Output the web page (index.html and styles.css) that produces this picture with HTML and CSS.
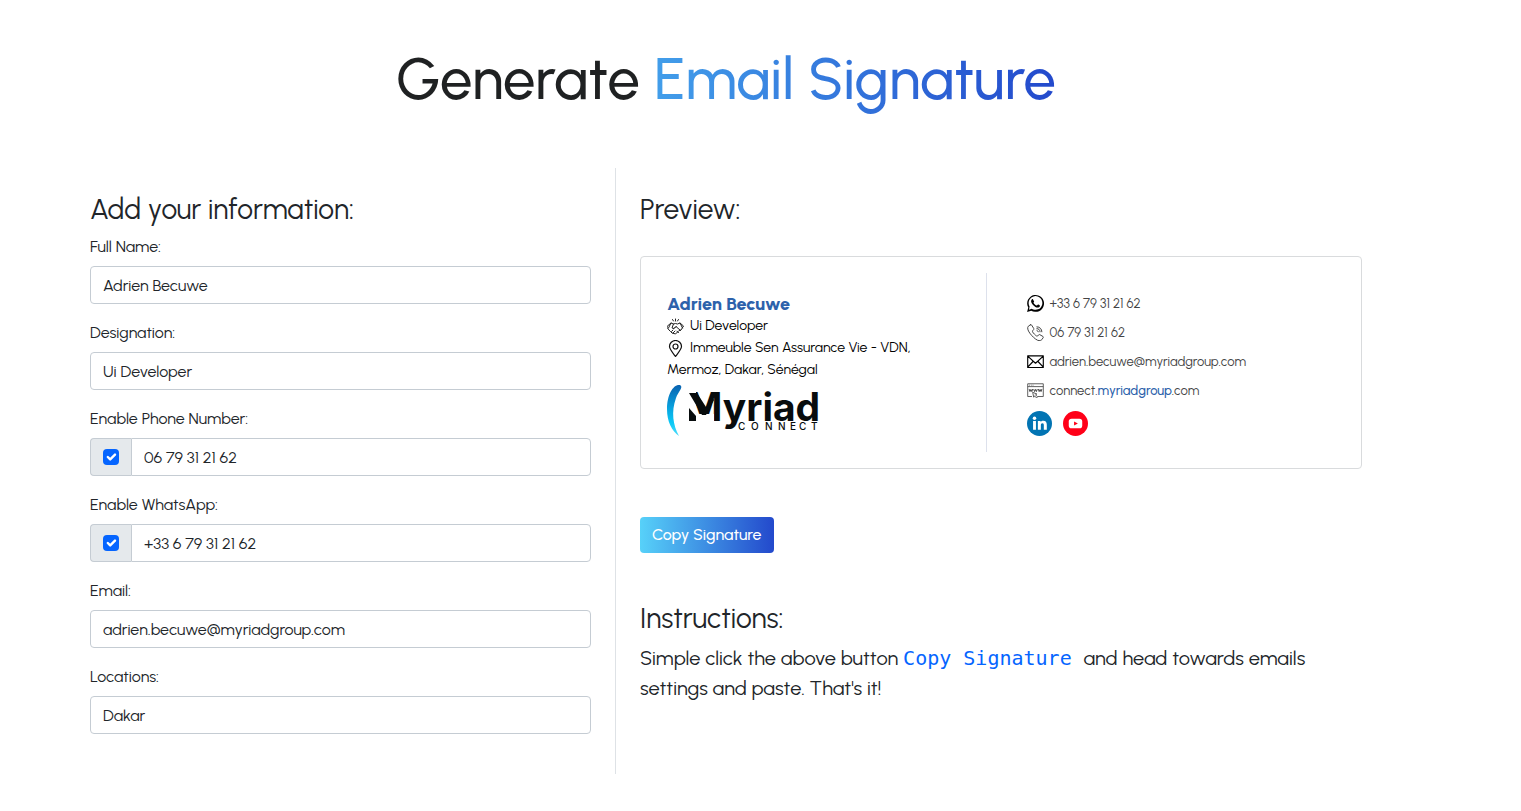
FILE: index.html
```html
<!DOCTYPE html>
<html lang="en">
<head>
<meta charset="utf-8">
<meta name="viewport" content="width=device-width, initial-scale=1">
<title>Generate Email Signature</title>
<link rel="stylesheet" href="styles.css">
</head>
<body>
<main class="page">
  <h1 class="title">Generate <span class="title-accent">Email Signature</span></h1>
  <div class="columns">
    <form class="form">
      <h2 class="heading">Add your information:</h2>
      <div class="field">
        <label for="name">Full Name:</label>
        <input class="control" id="name" type="text" value="Adrien Becuwe">
      </div>
      <div class="field">
        <label for="role">Designation:</label>
        <input class="control" id="role" type="text" value="Ui Developer">
      </div>
      <div class="field">
        <label for="phone">Enable Phone Number:</label>
        <div class="group">
          <span class="addon"><input class="check" type="checkbox" aria-label="Enable phone number" checked></span>
          <input class="control" id="phone" type="text" value="06 79 31 21 62">
        </div>
      </div>
      <div class="field">
        <label for="whatsapp">Enable WhatsApp:</label>
        <div class="group">
          <span class="addon"><input class="check" type="checkbox" aria-label="Enable WhatsApp" checked></span>
          <input class="control" id="whatsapp" type="text" value="+33 6 79 31 21 62">
        </div>
      </div>
      <div class="field">
        <label for="email">Email:</label>
        <input class="control" id="email" type="text" value="adrien.becuwe@myriadgroup.com">
      </div>
      <div class="field">
        <label for="location">Locations:</label>
        <input class="control" id="location" type="text" value="Dakar">
      </div>
    </form>
    <section class="output">
      <h2 class="heading">Preview:</h2>
      <div class="card">
        <div class="identity">
          <div class="person">Adrien Becuwe</div>
          <div class="line">
            <svg class="inline-icon" viewBox="0 0 34 34" fill="none" stroke="#222" stroke-width="2" stroke-linejoin="round" stroke-linecap="round"><path d="M1 16 8 10l5 2 4-1 4 1 5-2 7 6-5 8-4 1-7 7-3-1-4-1-3-3-3-3-3-4zM8 10l-5 10M26 10l5 10M13 12l-3 8 4 1 4-4 9 8M18 17l-4 4M12 24l-3 3M16 26l-4 4M20 27l3 2M17 2v4M11 3l2 3M23 3l-2 3"/></svg>Ui Developer
          </div>
          <div class="line">
            <svg class="inline-icon" viewBox="0 0 34 34" fill="none" stroke="#111" stroke-width="2.4"><path d="M17 33C11 25 5 18 5 13a12 12 0 0 1 24 0c0 5-6 12-12 20z"/><circle cx="17" cy="13" r="5"/></svg>Immeuble Sen Assurance Vie - VDN, Mermoz, Dakar, Sénégal
          </div>
          <svg class="logo" viewBox="0 0 156 52" role="img" aria-label="Myriad Connect">
            <defs><linearGradient id="swoosh" x1="0" y1="0" x2="0" y2="1"><stop offset="0" stop-color="#0a62b0"/><stop offset=".45" stop-color="#08a3df"/><stop offset=".75" stop-color="#0cc9f6"/><stop offset="1" stop-color="#52dcfa"/></linearGradient></defs>
            <path fill="url(#swoosh)" d="M13 0C6-1 0 10 0 24c0 13 5 22 12 27C6 40 4 27 9 13c2-6 8-11 4-13z"/>
            <text class="logo-name" x="19" y="36">Myriad</text>
            <path fill="#fff" d="M19 7h10v22h18v8H19z"/>
            <path fill="#080c0d" d="M22 8h8l9 14 6-10 2 3-8 15h-4zM22 23l7 8v5h-7z"/>
            <text class="logo-sub" x="71" y="45">C</text><text class="logo-sub" x="84" y="45">O</text><text class="logo-sub" x="98" y="45">N</text><text class="logo-sub" x="111" y="45">N</text><text class="logo-sub" x="123" y="45">E</text><text class="logo-sub" x="132" y="45">C</text><text class="logo-sub" x="144" y="45">T</text>
          </svg>
        </div>
        <div class="contacts">
          <div class="contact">
            <svg class="icon" viewBox="0 0 24 24"><path fill="#000" d="M.1 24l1.7-6.2A11.9 11.9 0 1 1 6 22.1zM6.600 19.300a9.700 9.700 0 1 0-3-3.200L2.900 20.900z" fill-rule="evenodd"/><path fill="#000" d="M8.500 6.300c-.4-.8-1-.6-1.500-.2-2.500 2.500-.8 5.500 1.500 8 3 3.200 6.300 4.700 8.800 3 .9-.7 1.100-1.900.9-2.300-.3-.4-2.200-1.300-2.700-1.300-.5 0-1 1.500-1.600 1.400-2-.7-3.700-2.200-4.700-4.100-.2-.5.900-1.200.9-1.800z"/></svg>
            <span>+33 6 79 31 21 62</span>
          </div>
          <div class="contact">
            <svg class="icon" viewBox="0 0 24 24" fill="none" stroke="#444" stroke-width="1.400" stroke-linejoin="round" stroke-linecap="round"><path d="M5 1 2 3C0 5 1 9 4 13s7 8 11 10c3 1 5 0 6-1l2-3c.4-.6 0-1-.5-1.400L18 15c-.7-.4-1.300-.2-1.700.4l-1.300 1.500c-1 .7-2 0-4.500-2.500S7.300 10.500 8 9.500L9.300 8c.5-.5.600-1 .2-1.700L6.500 1.500C6 .8 5.600.6 5 1zM14 9a3 3 0 0 1 2 2M14 6.500c2.500 0 4.500 2 4.500 4.500M14 4c4 0 7 3 7 7"/></svg>
            <span>06 79 31 21 62</span>
          </div>
          <div class="contact">
            <svg class="icon" viewBox="0 0 24 24" fill="none" stroke="#000" stroke-width="1.600" stroke-linejoin="round"><path d="M1 4h22v16.500H1zM1 4.500l11 10L23 4.500M1 20 8.500 12M23 20 15.500 12"/></svg>
            <span>adrien.becuwe@myriadgroup.com</span>
          </div>
          <div class="contact">
            <svg class="icon" viewBox="0 0 24 24" fill="none" stroke="#444" stroke-width="1.200" stroke-linejoin="round"><path d="M7 20.500H1V2.500h22v18h-8M1 6.500h22M3 4.500h1M5.500 4.500h1M8 4.500h1"/><path stroke-width="1.400" d="m3 10 1.200 3.500L5.500 10.500l1.300 3L8 10M9.500 10l1.200 3.500 1.300-3 1.300 3L14.500 10M16 10l1.200 3.500 1.300-3 1.300 3L21 10"/><path fill="#fff" d="m8 14.500 6 2.500-2 1 3 3-1.500 1.500-3-3-1 2z"/></svg>
            <span>connect.<b class="brand">myriadgroup</b>.com</span>
          </div>
          <div class="social">
            <a href="#" aria-label="LinkedIn"><svg class="badge" viewBox="0 0 26 26"><circle cx="13" cy="13" r="13" fill="#0274b3"/><path fill="#fff" d="M6.300 10.300h3V19.500h-3zM11.300 10.300h2.900v1.200c.6-.9 1.500-1.400 2.700-1.400 2.700 0 3.700 1.600 3.700 4.300v5.100h-3.100v-4.600c0-1.300-.3-2.200-1.400-2.200-1.300 0-1.700.9-1.700 2.200v4.600h-3.100z"/><circle cx="7.800" cy="7.500" r="1.800" fill="#fff"/></svg></a>
            <a href="#" aria-label="YouTube"><svg class="badge" viewBox="0 0 26 26"><circle cx="13" cy="13" r="13" fill="#ff0018"/><rect x="6" y="8" width="14" height="10" rx="3" fill="#fff"/><path fill="#ff0018" d="m11.500 11 4 2-4 2z"/></svg></a>
          </div>
        </div>
      </div>
      <button class="copy" type="button">Copy Signature</button>
      <h2 class="heading">Instructions:</h2>
      <p class="help">Simple click the above button <code>Copy Signature</code> and head towards emails settings and paste. That's it!</p>
    </section>
  </div>
</main>
</body>
</html>
```
FILE: styles.css
```css
* { box-sizing: border-box; }
body {
  margin: 0;
  background: #fff;
  color: #212529;
  font: 400 16px/24px Urbanist, Lato, "Open Sans", sans-serif;
}
.page { padding: 43px 159px 36px 90px; }
.title {
  margin: 0 0 53px;
  text-align: center;
  color: #1f2122;
  font-size: 58px;
  line-height: 72px;
  font-weight: 500;
}
.title-accent {
  color: transparent;
  background: linear-gradient(90deg, #429eea, #2349cc);
  -webkit-background-clip: text;
  background-clip: text;
}
.columns { display: grid; grid-template-columns: 525fr 747fr; }
.form { padding: 24px 24px 24px 0; }
.output { padding: 24px 0 24px 24px; border-left: 1px solid #dee2e6; }
.heading { margin: 0 0 8px; font-size: 28px; line-height: 34px; font-weight: 400; }
.field { margin-bottom: 16px; }
.field label { display: block; padding: 1px 0 7px; }
.control {
  display: block;
  width: 100%;
  height: 38px;
  padding: 6px 12px;
  border: 1px solid #c5ccd3;
  border-radius: 4px;
  background: #fff;
  color: #212529;
  font: inherit;
}
.group { display: flex; }
.group .control { flex: 1; min-width: 0; border-radius: 0 4px 4px 0; }
.addon {
  display: flex;
  align-items: center;
  padding: 0 12px;
  border: 1px solid #c5ccd3;
  border-right: 0;
  border-radius: 4px 0 0 4px;
  background: #e5e9ec;
}
.check {
  appearance: none;
  width: 16px;
  height: 16px;
  margin: 0;
  border-radius: 4px;
  background: #0565ff url("data:image/svg+xml,%3Csvg xmlns='http://www.w3.org/2000/svg' viewBox='0 0 20 20'%3E%3Cpath fill='none' stroke='white' stroke-linecap='round' stroke-linejoin='round' stroke-width='3' d='m6 10 3 3 6-6'/%3E%3C/svg%3E") center / contain;
}
.card {
  display: grid;
  grid-template-columns: 329fr 360fr;
  margin: 30px 0 48px;
  padding: 16px;
  border: 1px solid #d9dbdd;
  border-radius: 4px;
}
.identity { padding: 20px 60px 15px 10px; color: #000; font-size: 14px; line-height: 22px; }
.person { color: #2d62ab; font-size: 18px; font-weight: 800; }
.inline-icon { width: 17px; height: 17px; margin-right: 6px; vertical-align: -5px; }
.logo { display: block; width: 156px; height: 52px; margin-top: 4px; overflow: visible; }
.logo-name { font: 700 39px Inter, sans-serif; fill: #080c0d; }
.logo-sub { font: 500 10px Inter, sans-serif; fill: #080c0d; }
.contacts {
  padding: 22px 0 0 40px;
  border-left: 1px solid #dde1ec;
  color: #444;
  font-size: 13px;
  line-height: 17px;
}
.contact { display: flex; gap: 6px; margin-bottom: 12px; }
.icon { width: 17px; height: 17px; }
.brand { color: #2d62ab; font-weight: 500; }
.social { display: flex; gap: 11px; }
.badge { display: block; width: 25px; height: 25px; }
.copy {
  display: block;
  margin: 0 0 48px;
  height: 36px;
  padding: 0 12px;
  border: 0;
  border-radius: 4px;
  background: linear-gradient(90deg, #57d1f9, #2349cc);
  color: #fff;
  font: inherit;
  font-weight: 500;
}
.help { margin: 0; font-size: 20px; line-height: 30px; }
code { margin-right: 7px; color: #0565ff; font: 20px/24px "DejaVu Sans Mono", monospace; }
```
